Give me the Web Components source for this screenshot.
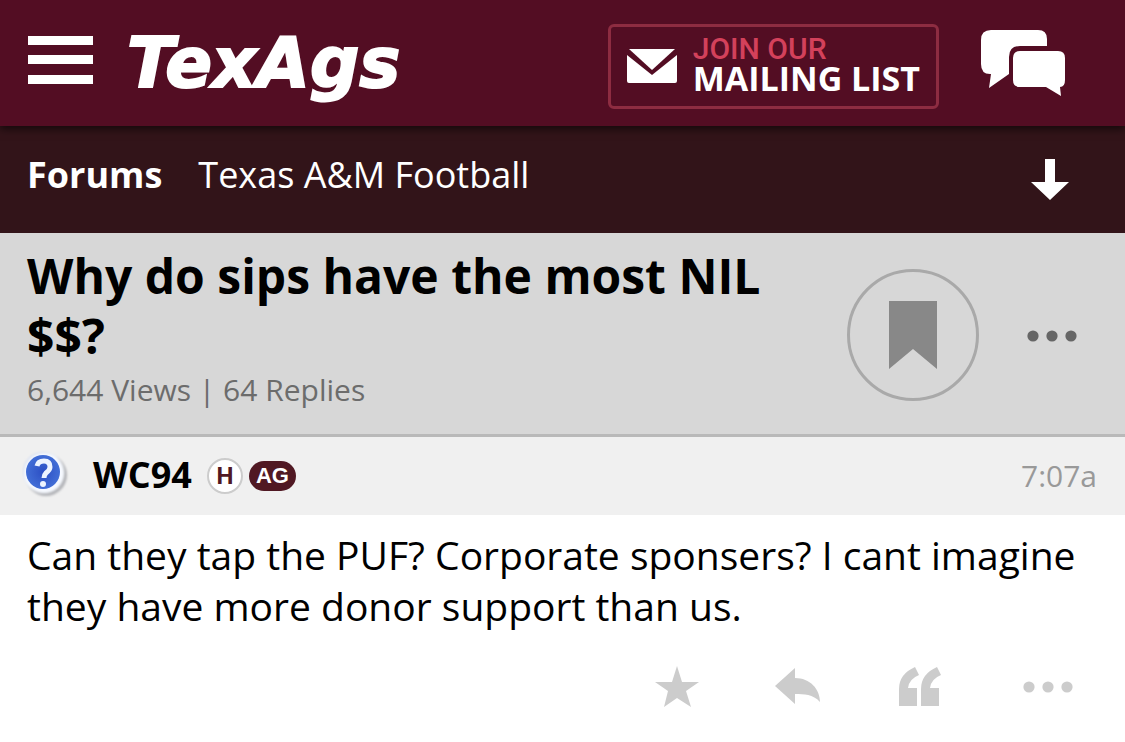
<!DOCTYPE html>
<html lang="en">
<head>
<meta charset="utf-8">
<meta name="viewport" content="width=device-width, initial-scale=1">
<title>Why do sips have the most NIL $$? | TexAgs</title>
<style>
body { margin: 0; background: #fff; color: #000; font-family: "Open Sans", "Noto Sans", sans-serif; }
</style>
</head>
<body>
<thread-page></thread-page>
<script>
const base = `
  *, *::before, *::after { box-sizing: border-box; }
  button { border: 0; padding: 0; margin: 0; background: none; color: inherit; font: inherit; display: flex; align-items: center; justify-content: center; cursor: pointer; }
  a { color: inherit; text-decoration: none; }
`;

function define(name, css, html) {
  customElements.define(name, class extends HTMLElement {
    constructor() {
      super();
      this.attachShadow({ mode: 'open' }).innerHTML = `<style>${base}${css}</style>${html}`;
    }
  });
}

const icons = {
  menu: [65, 48, '<path d="M0 0h65v9H0zM0 19h65v9H0zM0 39h65v9H0z"/>'],
  mail: [50, 34, '<path d="M2 0h46l-23 21z"/><path d="M0 6l25 20L50 6v26a2 2 0 0 1-2 2H2a2 2 0 0 1-2-2z"/>'],
  chat: [84, 68, '<path d="M10 1h47q9 0 9 9v7H39q-11 0-11 11v17L8 59l2-14H9q-9 0-9-10V11Q0 1 10 1z"/><path d="M39 22h38q7 0 7 7v22q0 7-5 7l1 9-15-9H39q-7 0-7-7V29q0-7 7-7z"/>'],
  down: [38, 42, '<path d="M14 0h10v23h14L19 41 0 23h14z"/>'],
  bookmark: [48, 68, '<path d="M0 0h48v68L24 48 0 68z"/>'],
  dots: [50, 12, '<circle cx="6" cy="6" r="5.6"/><circle cx="25" cy="6" r="5.6"/><circle cx="44" cy="6" r="5.6"/>'],
  star: [44, 42, '<path d="M22 0l5 16h17L31 25l5 16-14-9-13 9 4-16L0 16h17z"/>'],
  reply: [46, 38, '<path d="M0 18L20 0v10c15 0 25 11 25 24-7-8-16-8-25-8v10z"/>'],
  quote: [42, 40, '<path d="M16 0l4 8q-10 4-11 13h9v18H0V22Q0 7 16 0z"/><path d="M38 0l4 8q-10 4-11 13h9v18H22V22Q22 7 38 0z"/>'],
  avatar: [50, 50, `
    <defs><radialGradient id="g" cx=".5" cy=".5" r=".6"><stop offset="0" stop-color="#2c4fc4"/><stop offset="1" stop-color="#4674da"/></radialGradient>
    <filter id="soft" x="-10%" y="-10%" width="120%" height="120%"><feGaussianBlur stdDeviation="1"/></filter></defs>
    <g filter="url(#soft)"><circle cx="24" cy="26" r="21" fill="#b4b5b9"/><circle cx="21" cy="23" r="20" fill="#d3dcef"/>
    <circle cx="22" cy="24" r="20" fill="#f6f9ff"/></g><circle cx="21" cy="23" r="17" fill="url(#g)"/>
    <path d="M15 17q1-5 7-5t6 6q0 3-4 6-2 2-2 5" fill="none" stroke="#edf4ff" stroke-width="5"/>
    <circle cx="21" cy="35" r="3" fill="#edf4ff"/>`]
};

customElements.define('ui-icon', class extends HTMLElement {
  constructor() { super(); this.attachShadow({ mode: 'open' }); }
  connectedCallback() {
    const [w, h, body] = icons[this.getAttribute('name')];
    this.shadowRoot.innerHTML = `<style>:host{display:block;flex:none}svg{display:block;fill:currentColor}</style>
      <svg width="${w}" height="${h}" viewBox="0 0 ${w} ${h}" aria-hidden="true">${body}</svg>`;
  }
});

define('site-header', `
  :host { display: block; position: relative; background: #530d23; color: #fff; box-shadow: 0 3px 8px rgba(0,0,0,.6); }
  header { display: flex; align-items: center; min-height: 126px; padding: 0 60px 0 28px; }
  .menu { margin: 0 34px 6px 0; }
  .logo { font: italic bold 69px/80px "DejaVu Sans", sans-serif; -webkit-text-stroke: 2px #fff; }
  .join { display: flex; align-items: center; gap: 16px; height: 85px; margin: 6px 42px 0 auto; padding: 0 16px; border: 3px solid #8d2c41; border-radius: 6px; }
  .join span { display: block; }
  .label { padding-bottom: 4px; }
  .top { font: 500 30px/28px Roboto, sans-serif; color: #d3415b; }
  .main { font-size: 34px; line-height: 30px; font-weight: 700; white-space: nowrap; }
`, `<header>
  <button class="menu" aria-label="Menu"><ui-icon name="menu"></ui-icon></button>
  <a class="logo" href="#">TexAgs</a>
  <a class="join" href="#"><ui-icon name="mail"></ui-icon><span class="label"><span class="top">JOIN OUR</span><span class="main">MAILING LIST</span></span></a>
  <button aria-label="Chat"><ui-icon name="chat"></ui-icon></button>
</header>`);

define('forum-nav', `
  :host { display: block; background: #321419; color: #fff; }
  nav { display: flex; align-items: center; min-height: 107px; padding: 0 56px 0 27px; font-size: 36px; line-height: 48px; }
  .crumbs { display: flex; flex: 1; gap: 36px; padding-bottom: 10px; }
  .crumbs a:first-child { font-weight: 700; }
`, `<nav aria-label="Breadcrumb"><div class="crumbs"><a href="#">Forums</a><a href="#">Texas A&amp;M Football</a></div>
  <button aria-label="Jump to bottom"><ui-icon name="down"></ui-icon></button></nav>`);

define('thread-title', `
  :host { display: block; background: #d7d7d7; border-bottom: 3px solid #b9b9b9; }
  section { display: flex; align-items: center; min-height: 201px; padding: 13px 48px 20px 27px; }
  .text { flex: 1; }
  h1 { margin: 0; font-size: 48px; line-height: 60px; font-weight: 700; }
  p { margin: 0; font-size: 30px; line-height: 48px; color: #6c6c6c; }
  .mark { width: 132px; height: 132px; margin: 10px 48px 0 80px; border: 3px solid #a9a9a9; border-radius: 50%; color: #888; }
  .more { color: #666; margin-top: 12px; }
`, `<section><div class="text"><h1><slot name="title"></slot></h1><p><slot name="stats"></slot></p></div>
  <button class="mark" aria-label="Bookmark"><ui-icon name="bookmark"></ui-icon></button>
  <button class="more" aria-label="Thread options"><ui-icon name="dots"></ui-icon></button></section>`);

define('forum-post', `
  :host { display: block; background: #fff; }
  header { display: flex; align-items: center; min-height: 78px; padding: 0 28px 0 22px; background: #f0f0f0; }
  .avatar { padding-bottom: 4px; }
  .name { margin: 0 15px 0 21px; padding-bottom: 2px; font-size: 36px; line-height: 48px; font-weight: 700; }
  .badge { display: flex; align-items: center; justify-content: center; font: bold 24px/30px "Liberation Sans", sans-serif; }
  .h { width: 36px; height: 36px; margin-right: 6px; border: 2px solid #ccc; border-radius: 50%; background: #fff; color: #501823; font-family: Roboto, sans-serif; }
  .ag { width: 47px; height: 30px; border-radius: 15px; background: #501823; color: #fff; font-size: 22px; }
  time { margin-left: auto; font-size: 30px; line-height: 40px; color: #999; }
  p { margin: 0; padding: 14px 27px 0; font-size: 39px; line-height: 51px; }
  footer { display: flex; align-items: center; justify-content: flex-end; height: 112px; padding-right: 52px; color: #ccc; }
  .star { margin-right: 76px; }
  .reply { margin-right: 78px; }
  .quote { margin-right: 82px; }
`, `<article><header><ui-icon class="avatar" name="avatar"></ui-icon><a class="name" href="#"><slot name="author"></slot></a>
  <span class="badge h">H</span><span class="badge ag">AG</span><time datetime="07:07"><slot name="time"></slot></time></header>
  <p><slot></slot></p>
  <footer><button class="star" aria-label="Star"><ui-icon name="star"></ui-icon></button>
  <button class="reply" aria-label="Reply"><ui-icon name="reply"></ui-icon></button>
  <button class="quote" aria-label="Quote"><ui-icon name="quote"></ui-icon></button>
  <button aria-label="Post options"><ui-icon name="dots"></ui-icon></button></footer></article>`);

define('thread-page', `:host { display: block; }`, `
  <site-header></site-header>
  <main><forum-nav></forum-nav>
  <thread-title><span slot="title">Why do sips have the most NIL $$?</span><span slot="stats">6,644 Views | 64 Replies</span></thread-title>
  <forum-post><span slot="author">WC94</span><span slot="time">7:07a</span>Can they tap the PUF? Corporate sponsers? I cant imagine they have more donor support than us.</forum-post></main>`);
</script>
</body>
</html>
